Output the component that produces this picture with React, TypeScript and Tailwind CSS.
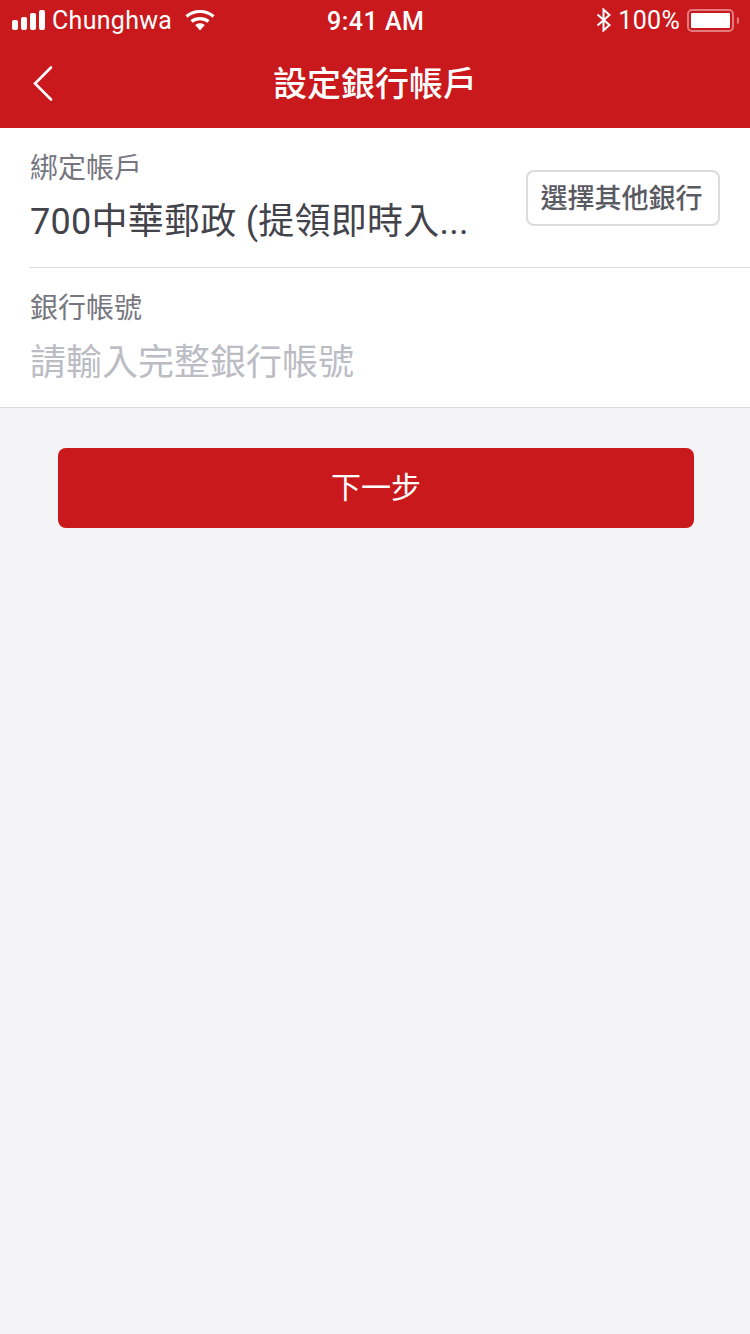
import React from 'react';

const font = "font-['Roboto','Noto_Sans_CJK_TC',sans-serif]";

const SignalBars = () => (
  <div className="flex items-end gap-[3px]">
    <span className="w-[6px] h-[10px] rounded-[2px] bg-white" />
    <span className="w-[6px] h-[13px] rounded-[2px] bg-white" />
    <span className="w-[6px] h-[17px] rounded-[2px] bg-white" />
    <span className="w-[6px] h-[20px] rounded-[2px] bg-white" />
  </div>
);

const WifiIcon = () => (
  <svg width="30" height="22" viewBox="0 0 30 22" fill="none">
    <path d="M1.5 7.5C9 .8 21 .8 28.5 7.5" stroke="#fff" strokeWidth="3.2" />
    <path d="M6.5 12.5C11.2 8.6 18.8 8.6 23.5 12.5" stroke="#fff" strokeWidth="3.2" />
    <path d="M10.2 16C13 13.6 17 13.6 19.8 16L15 21.5Z" fill="#fff" />
  </svg>
);

const BluetoothIcon = () => (
  <svg width="16" height="24" viewBox="0 0 16 24" fill="none">
    <path d="M1.5 6.5L13.5 17L7.5 22.5V1.5L13.5 7L1.5 17.5" stroke="#fff" strokeWidth="2" />
  </svg>
);

const Battery = () => (
  <div className="flex items-center">
    <div className="w-[47px] h-[23px] rounded-[5px] border-2 border-[#e47b7f] p-[2px]">
      <div className="w-full h-full rounded-[1px] bg-white" />
    </div>
    <span className="ml-[3px] w-[2px] h-[7px] rounded-r-[2px] bg-[#e47b7f]" />
  </div>
);

const StatusBar = () => (
  <div className="relative h-[40px] flex items-center justify-between pl-[12px] pr-[11px] text-white">
    <div className="flex items-center">
      <SignalBars />
      <span className="ml-[7px] text-[25px] tracking-[0.3px] leading-none">Chunghwa</span>
      <span className="ml-[13px]"><WifiIcon /></span>
    </div>
    <span className="absolute left-[327px] top-[7px] text-[25px] font-medium tracking-[0.5px] leading-[30px]">9:41 AM</span>
    <div className="flex items-center">
      <BluetoothIcon />
      <span className="ml-[6px] mr-[7px] text-[25px] tracking-[0.3px] leading-none">100%</span>
      <Battery />
    </div>
  </div>
);

const NavBar = () => (
  <div className="relative h-[88px] flex items-center justify-center">
    <svg className="absolute left-[32px] top-[25px]" width="22" height="38" viewBox="0 0 22 38" fill="none">
      <path d="M19 2.5L3 18.5L19 34.5" stroke="#fff" strokeWidth="2.6" strokeLinecap="round" />
    </svg>
    <h1 className="text-[34px] font-medium text-white leading-none pb-[1px]">設定銀行帳戶</h1>
  </div>
);

export default function App() {
  return (
    <div className={`${font} min-h-[1334px] bg-[#f4f4f6] flex flex-col`}>
      <div className="bg-[#c9191c]">
        <StatusBar />
        <NavBar />
      </div>

      <div className="bg-white pl-[30px] border-b border-[#dcdce0]">
        <div className="h-[140px] border-b border-[#dcdce0] flex justify-between pr-[30px]">
          <div className="w-[450px] pt-[21px]">
            <p className="text-[28px] leading-[40px] text-[#76767f]">綁定帳戶</p>
            <p className="text-[36px] leading-[50px] text-[#43434c] mt-[8px] tracking-[0.25px] whitespace-nowrap">700中華郵政 (提領即時入...</p>
          </div>
          <button className="self-center h-[56px] w-[194px] pt-[3px] pr-[3px] rounded-[8px] border-2 border-[#dcdce0] bg-white text-[27px] font-medium text-[#5a5a63] leading-none">
            選擇其他銀行
          </button>
        </div>
        <div className="h-[139px] pt-[21px]">
          <p className="text-[28px] leading-[40px] text-[#76767f]">銀行帳號</p>
          <p className="text-[36px] leading-[50px] text-[#bcbcc4] mt-[9px]">請輸入完整銀行帳號</p>
        </div>
      </div>

      <div className="pl-[58px] pr-[56px] pt-[40px]">
        <button className="w-full h-[80px] rounded-[8px] bg-[#c9191c] text-white text-[30px] leading-none">
          下一步
        </button>
      </div>
    </div>
  );
}
